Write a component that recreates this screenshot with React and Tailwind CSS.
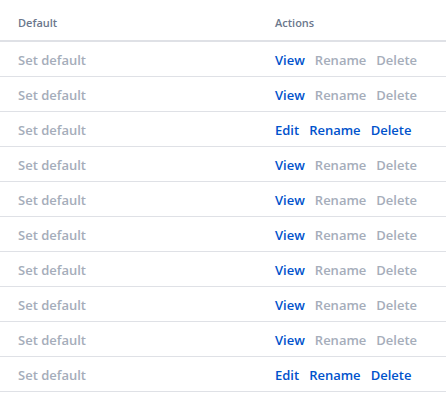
export default function App() {
  const rows = [0,0,1,0,0,0,0,0,0,1];
  return (
    <div className="w-[446px] bg-white" style={{fontFamily: '"Open Sans", "Noto Sans", sans-serif'}}>
      <div className="flex h-[42px] items-end pb-[9px] border-b-2 border-[#dfe1e6] text-[11px] font-semibold text-[#6b778c]">
        <div className="w-[275px] pl-[18px]">Default</div>
        <div>Actions</div>
      </div>
      {rows.map((e, i) => (
        <div key={i} className="flex h-[35px] items-center pt-[3px] border-b border-[#dfe1e6] text-[13px] font-semibold">
          <div className="w-[275px] pl-[18px] text-[#a5adba]">Set default</div>
          {e ? (
            <div className="flex gap-[10px] text-[#0052cc]">
              <span>Edit</span><span>Rename</span><span>Delete</span>
            </div>
          ) : (
            <div className="flex gap-[10px] text-[#a5adba]">
              <span className="text-[#0052cc]">View</span><span>Rename</span><span>Delete</span>
            </div>
          )}
        </div>
      ))}
    </div>
  );
}
